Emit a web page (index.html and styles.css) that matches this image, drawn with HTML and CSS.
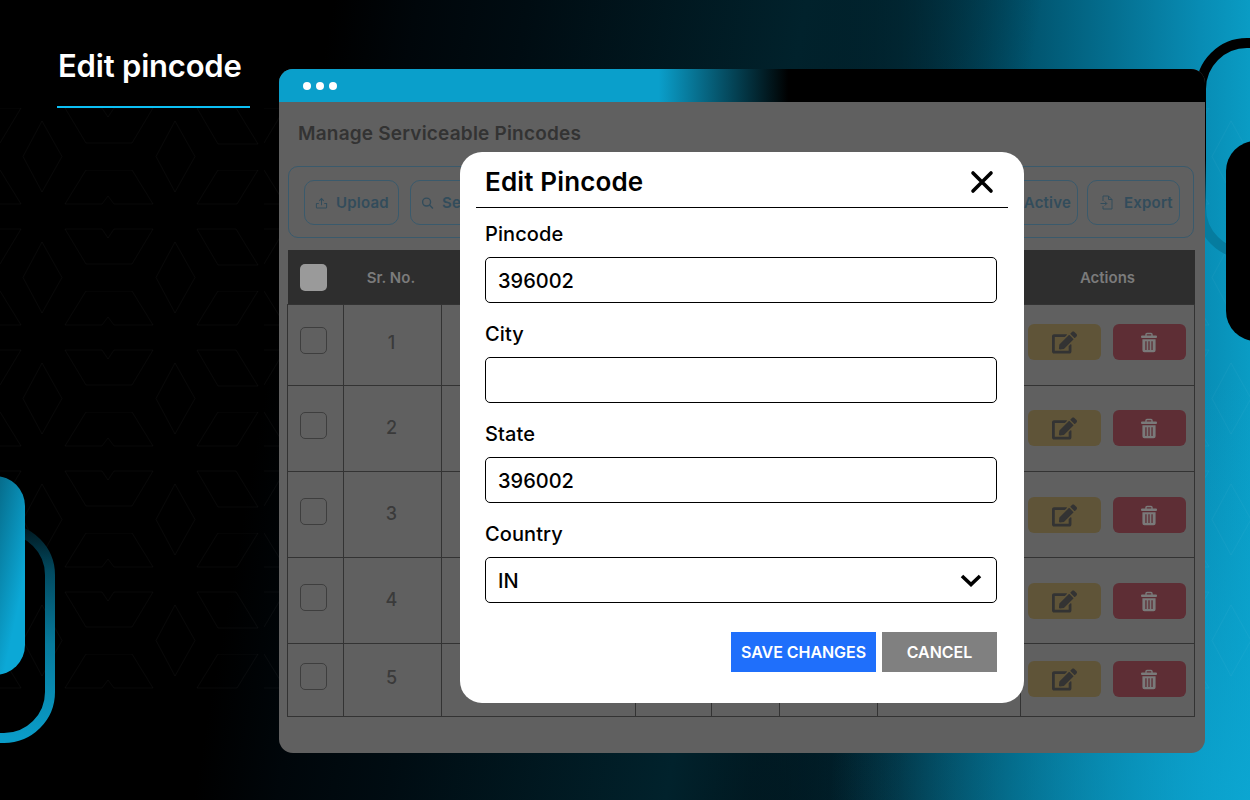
FILE: index.html
```html
<!DOCTYPE html>
<html lang="en">
<head>
    <meta charset="UTF-8">
    <meta name="viewport" content="width=device-width, initial-scale=1.0">
    <title>Edit pincode</title>
    <link rel="stylesheet" href="styles.css">
</head>
<body>
    <svg class="icon-defs" width="0" height="0">
        <symbol id="i-edit" viewBox="0 0 576 512">
            <path fill="currentColor" d="M402.6 83.2l90.2 90.2c3.8 3.8 3.8 10 0 13.8L274.4 405.6l-92.8 10.3c-12.4 1.4-22.9-9.1-21.5-21.5l10.3-92.8L388.8 83.2c3.8-3.8 10-3.8 13.8 0zm162-22.9l-48.8-48.8c-15.2-15.2-39.9-15.2-55.2 0l-35.4 35.4c-3.8 3.8-3.8 10 0 13.8l90.2 90.2c3.8 3.8 10 3.8 13.8 0l35.4-35.4c15.2-15.3 15.2-40 0-55.2zM384 346.2V448H64V128h229.8c3.2 0 6.2-1.3 8.5-3.5l40-40c7.6-7.6 2.2-20.5-8.5-20.5H48C21.5 64 0 85.5 0 112v352c0 26.5 21.5 48 48 48h352c26.5 0 48-21.5 48-48V306.2c0-10.7-12.9-16-20.5-8.5l-40 40c-2.2 2.3-3.5 5.3-3.5 8.5z"/>
        </symbol>
        <symbol id="i-trash" viewBox="0 0 16 20">
            <path fill="none" stroke="currentColor" stroke-width="1.4" d="M5 3.5V2a1 1 0 0 1 1-1h4a1 1 0 0 1 1 1v1.5"/>
            <rect x="0" y="3" width="16" height="2.6" rx="1" fill="currentColor"/>
            <path fill="currentColor" fill-rule="evenodd" d="M1.4 6.8h13.2v11a2 2 0 0 1-2 2H3.4a2 2 0 0 1-2-2zM4.3 8.8v8.6h1.3V8.8zM7.35 8.8v8.6h1.3V8.8zM10.4 8.8v8.6h1.3V8.8z"/>
        </symbol>
    </svg>

    <div class="page">
        <!-- background shapes and the faint line pattern -->
        <svg class="decor" width="1250" height="800" viewBox="0 0 1250 800">
            <defs>
                <pattern id="tiles" width="264" height="121" patternUnits="userSpaceOnUse" patternTransform="translate(0 49)">
                    <g fill="none" stroke="#fff" stroke-opacity="0.03" stroke-width="1">
                        <path d="M23 -13.5L42 -49L62 -13.5L42 22ZM156 -13.5L175 -49L195 -13.5L175 22Z"/>
                        <path d="M23 107.5L42 72L62 107.5L42 143ZM156 107.5L175 72L195 107.5L175 143Z"/>
                        <path d="M65 34L86 0H132L153 34H114L108 26L102 34Z"/>
                        <path d="M65 59H102L108 68L114 59H153L132 94H86Z"/>
                        <path d="M197 34L218 0H258L237 34Z"/>
                        <path d="M197 59H236L258 95H218Z"/>
                        <path d="M-64 0H0L21 34H-43Z"/>
                        <path d="M-43 59H21L0 94H-64Z"/>
                    </g>
                </pattern>
                <linearGradient id="fade-left" x1="0" y1="0" x2="0" y2="1">
                    <stop offset="0" stop-color="#011a22"/>
                    <stop offset="0.2" stop-color="#024a60"/>
                    <stop offset="0.55" stop-color="#077a9c"/>
                    <stop offset="1" stop-color="#0a9cc8"/>
                </linearGradient>
                <linearGradient id="fill-left" x1="0" y1="0" x2="1" y2="0.5">
                    <stop offset="0.3" stop-color="#02485e"/>
                    <stop offset="1" stop-color="#0ca8d6"/>
                </linearGradient>
                <linearGradient id="fade-right" x1="0" y1="0" x2="0" y2="1">
                    <stop offset="0" stop-color="#000"/>
                    <stop offset="0.55" stop-color="#000"/>
                    <stop offset="0.8" stop-color="#067c9f"/>
                    <stop offset="1" stop-color="#067c9f"/>
                </linearGradient>
            </defs>
            <rect x="0" y="108" width="1250" height="582" fill="url(#tiles)"/>
            <rect x="-60" y="529" width="110" height="209" rx="46" fill="none" stroke="url(#fade-left)" stroke-width="10"/>
            <rect x="-60" y="476" width="85" height="199" rx="30" fill="url(#fill-left)"/>
            <rect x="1201" y="43" width="120" height="211" rx="46" fill="none" stroke="url(#fade-right)" stroke-width="10"/>
            <rect x="1226" y="141" width="80" height="200" rx="30" fill="#000"/>
        </svg>

        <div class="page-title">
            <h1>Edit pincode</h1>
        </div>

        <div class="window">
            <div class="window-bar">
                <span class="dot"></span>
                <span class="dot"></span>
                <span class="dot"></span>
            </div>
            <div class="window-body">
                <h2>Manage Serviceable Pincodes</h2>
                <div class="toolbar">
                    <button class="tool-btn btn-upload">
                        <svg width="13" height="14" viewBox="0 0 14 14" fill="none" stroke="currentColor" stroke-width="1.1"><path d="M7 9.5V2.5M4.6 4.6L7 2.2l2.4 2.4M1.5 7.5v4a1 1 0 0 0 1 1h9a1 1 0 0 0 1-1v-4h-2.6M4.1 7.5H1.5"/></svg>
                        Upload
                    </button>
                    <button class="tool-btn btn-search">
                        <svg width="13" height="14" viewBox="0 0 14 14" fill="none" stroke="currentColor" stroke-width="1.5"><circle cx="6" cy="6" r="4.3"/><path d="M9.2 9.2l3.6 3.6"/></svg>
                        Search
                    </button>
                    <button class="tool-btn btn-active">Active</button>
                    <button class="tool-btn btn-export">
                        <svg width="13" height="15" viewBox="0 0 13 15" fill="none" stroke="currentColor" stroke-width="1"><path d="M3 6V1h5.5L12 4.5V14H3v-3M8.5 1v3.5H12M.5 8.5h6M4.8 6.5l2 2-2 2"/></svg>
                        Export
                    </button>
                </div>
                <table class="pin-table">
                    <colgroup>
                        <col class="col-check">
                        <col class="col-no">
                        <col class="col-pin">
                        <col class="col-city">
                        <col class="col-state">
                        <col class="col-country">
                        <col class="col-status">
                        <col class="col-actions">
                    </colgroup>
                    <thead>
                        <tr>
                            <th><span class="check check-head"></span></th>
                            <th class="head-no">Sr. No.</th>
                            <th></th>
                            <th></th>
                            <th></th>
                            <th></th>
                            <th></th>
                            <th>Actions</th>
                        </tr>
                    </thead>
                    <tbody>
                        <tr class="row-1">
                            <td><span class="check"></span></td>
                            <td class="num">1</td>
                            <td></td><td></td><td></td><td></td><td></td>
                            <td><div class="actions"><span class="act act-edit"><svg width="25" height="23"><use href="#i-edit"/></svg></span><span class="act act-del"><svg width="16" height="21"><use href="#i-trash"/></svg></span></div></td>
                        </tr>
                        <tr class="row-2">
                            <td><span class="check"></span></td>
                            <td class="num">2</td>
                            <td></td><td></td><td></td><td></td><td></td>
                            <td><div class="actions"><span class="act act-edit"><svg width="25" height="23"><use href="#i-edit"/></svg></span><span class="act act-del"><svg width="16" height="21"><use href="#i-trash"/></svg></span></div></td>
                        </tr>
                        <tr class="row-3">
                            <td><span class="check"></span></td>
                            <td class="num">3</td>
                            <td></td><td></td><td></td><td></td><td></td>
                            <td><div class="actions"><span class="act act-edit"><svg width="25" height="23"><use href="#i-edit"/></svg></span><span class="act act-del"><svg width="16" height="21"><use href="#i-trash"/></svg></span></div></td>
                        </tr>
                        <tr class="row-4">
                            <td><span class="check"></span></td>
                            <td class="num">4</td>
                            <td></td><td></td><td></td><td></td><td></td>
                            <td><div class="actions"><span class="act act-edit"><svg width="25" height="23"><use href="#i-edit"/></svg></span><span class="act act-del"><svg width="16" height="21"><use href="#i-trash"/></svg></span></div></td>
                        </tr>
                        <tr class="row-5">
                            <td><span class="check"></span></td>
                            <td class="num">5</td>
                            <td></td><td></td><td></td><td></td><td></td>
                            <td><div class="actions"><span class="act act-edit"><svg width="25" height="23"><use href="#i-edit"/></svg></span><span class="act act-del"><svg width="16" height="21"><use href="#i-trash"/></svg></span></div></td>
                        </tr>
                    </tbody>
                </table>
            </div>
        </div>

        <div class="modal">
            <div class="modal-head">
                <h3>Edit Pincode</h3>
                <svg class="modal-close" width="24" height="24" viewBox="0 0 24 24" fill="none" stroke="#000" stroke-width="3.6" stroke-linecap="round"><path d="M3 3l18 18M21 3L3 21"/></svg>
            </div>
            <div class="field">
                <label>Pincode</label>
                <input type="text" value="396002">
            </div>
            <div class="field">
                <label>City</label>
                <input type="text" value="">
            </div>
            <div class="field">
                <label>State</label>
                <input type="text" value="396002">
            </div>
            <div class="field">
                <label>Country</label>
                <div class="select-wrap">
                    <select><option>IN</option></select>
                    <svg class="chevron" width="22" height="13" viewBox="0 0 22 13" fill="none" stroke="#000" stroke-width="3.6"><path d="M2 2l9 8.5L20 2"/></svg>
                </div>
            </div>
            <div class="modal-actions">
                <button class="btn-save">SAVE CHANGES</button>
                <button class="btn-cancel">CANCEL</button>
            </div>
        </div>
    </div>
</body>
</html>
```

FILE: styles.css
```css
* {
    box-sizing: border-box;
}
body {
    margin: 0;
    font-family: Inter, "Liberation Sans", sans-serif;
}
button {
    font-family: inherit;
}
.icon-defs {
    position: absolute;
}
.page {
    position: relative;
    width: 1250px;
    height: 800px;
    overflow: hidden;
    background:
        radial-gradient(420px 420px at 1250px 800px, rgba(12, 168, 212, 0.8), rgba(12, 168, 212, 0)),
        linear-gradient(100deg, rgba(0, 6, 10, 0) 24%, rgba(0, 6, 10, 1) 30%, rgba(0, 12, 18, 1) 38%, rgba(1, 34, 44, 1) 58%, rgba(1, 34, 44, 0) 75%),
        linear-gradient(90deg, #000 45%, #000a10 60%, #012a38 72%, #004f68 81%, #046f90 89%, #088cb4 96%, #0a9cc4 100%);
}
.decor {
    position: absolute;
    left: 0;
    top: 0;
}
.page-title {
    position: relative;
    width: 193px;
    height: 108px;
    margin-left: 57px;
    padding-top: 47px;
    border-bottom: 2px solid #0cc0f5;
}
.page-title h1 {
    margin: 0 0 0 1px;
    color: #fff;
    font-size: 31px;
    line-height: 38px;
    font-weight: 600;
    letter-spacing: -0.2px;
    white-space: nowrap;
}

/* window */
.window {
    position: absolute;
    left: 279px;
    top: 69px;
    width: 926px;
    height: 684px;
    border-radius: 14px;
    overflow: hidden;
    background: #606060;
}
.window-bar {
    display: flex;
    align-items: center;
    gap: 5px;
    height: 33px;
    padding-left: 24px;
    background: linear-gradient(90deg, #0a9fcb 41%, #000 55%);
}
.dot {
    width: 8px;
    height: 8px;
    border-radius: 50%;
    background: #fff;
}
.window-body {
    padding: 20px 10px 0 9px;
}
.window-body h2 {
    margin: 0 0 20px 10px;
    color: #333;
    font-size: 19px;
    line-height: 24px;
    font-weight: 600;
    letter-spacing: 0.2px;
}
.toolbar {
    display: flex;
    gap: 11px;
    width: 906px;
    height: 72px;
    padding: 13px 13px 0 15px;
    border: 1px solid #3a5a6c;
    border-radius: 10px;
}
.tool-btn {
    display: flex;
    align-items: center;
    gap: 8px;
    height: 45px;
    border: 1px solid #3a5a6c;
    border-radius: 10px;
    background: none;
    color: #324c5b;
    font-size: 15px;
    font-weight: 600;
    letter-spacing: 0.2px;
}
.btn-upload {
    width: 95px;
    padding-left: 10px;
}
.btn-search {
    width: 200px;
    padding-left: 10px;
}
.btn-active {
    width: 150px;
    margin-left: auto;
    justify-content: flex-end;
    padding-right: 6px;
}
.btn-export {
    width: 93px;
    margin-left: -2px;
    padding-left: 12px;
    gap: 11px;
}

/* table */
.pin-table {
    width: 908px;
    margin-top: 12px;
    margin-left: -1px;
    table-layout: fixed;
    border-collapse: collapse;
    color: #3a3a3a;
}
.col-check { width: 56px; }
.col-no { width: 98px; }
.col-pin { width: 194px; }
.col-city { width: 76px; }
.col-state { width: 68px; }
.col-country { width: 98px; }
.col-status { width: 143px; }
.pin-table th {
    height: 54px;
    padding: 1px 0 0;
    background: #2e2e2e;
    color: #7b7b7b;
    font-size: 15px;
    font-weight: 600;
    text-align: center;
}
.pin-table .head-no {
    padding-right: 3px;
}
.pin-table td {
    padding: 0 0 3px;
    border: 1px solid #333;
    text-align: center;
}
.pin-table .row-1 td {
    padding-bottom: 6px;
}
.row-1 { height: 81px; }
.row-2 { height: 86px; }
.row-3 { height: 86px; }
.row-4 { height: 86px; }
.row-5 { height: 73px; }
.pin-table .num {
    padding: 1px 2px 2px 0;
    font-size: 18px;
    font-weight: 500;
}
.pin-table .row-5 .num {
    padding-top: 0;
    padding-bottom: 5px;
}
.check {
    display: block;
    width: 27px;
    height: 27px;
    margin-left: 12px;
    margin-bottom: 3px;
    border: 1px solid #3e3e3e;
    border-radius: 5px;
}
.check-head {
    margin-bottom: 0;
    border: none;
    background: #9a9a9a;
}
.actions {
    display: flex;
    justify-content: center;
    gap: 12px;
    margin-left: -2px;
}
.row-1 .actions { margin-top: 1px; }
.row-2 .actions { margin-top: 3px; }
.row-3 .actions { margin-top: 5px; }
.row-4 .actions { margin-top: 5px; }
.row-5 .actions { margin-top: 2px; }
.act {
    display: flex;
    align-items: center;
    justify-content: center;
    width: 73px;
    height: 36px;
    border-radius: 6px;
}
.act-edit {
    background: #5f5438;
    color: #333;
}
.act-del {
    background: #5e2e35;
    color: #7a7a7a;
}

/* modal */
.modal {
    position: absolute;
    left: 460px;
    top: 152px;
    width: 564px;
    height: 551px;
    padding: 0 27px 0 25px;
    border-radius: 22px;
    background: #fff;
    color: #000;
}
.modal-head {
    display: flex;
    align-items: center;
    justify-content: space-between;
    height: 56px;
    margin: 0 -11px 14px -9px;
    padding: 4px 14px 0 9px;
    border-bottom: 1px solid #000;
}
.modal-head h3 {
    margin: 0;
    font-size: 26px;
    font-weight: 600;
    letter-spacing: 0.15px;
}
.field {
    display: flex;
    flex-direction: column;
    gap: 11px;
    margin-bottom: 19px;
}
.field label {
    font-size: 20px;
    line-height: 24px;
    font-weight: 500;
    letter-spacing: 0.1px;
}
.field input,
.field select {
    width: 100%;
    height: 46px;
    padding: 2px 12px 0;
    border: 1.5px solid #000;
    border-radius: 5px;
    background: #fff;
    color: #000;
    font-family: inherit;
    font-size: 20px;
    font-weight: 500;
    appearance: none;
}
.select-wrap {
    position: relative;
}
.chevron {
    position: absolute;
    right: 15px;
    top: 17px;
}
.modal-actions {
    display: flex;
    justify-content: flex-end;
    gap: 6px;
    margin-top: 29px;
}
.modal-actions button {
    height: 40px;
    padding: 0;
    border: none;
    color: #fff;
    font-size: 16px;
    font-weight: 600;
}
.btn-save {
    width: 145px;
    background: #1f6ffb;
    letter-spacing: -0.05px;
}
.btn-cancel {
    width: 115px;
    background: #808080;
}
```
